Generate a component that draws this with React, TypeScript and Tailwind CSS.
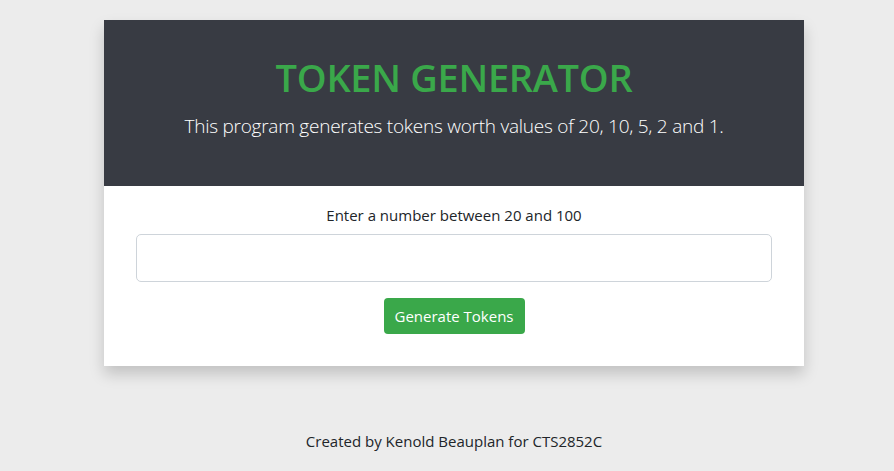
import React, { useState } from 'react';

const App = () => {
  const [amount, setAmount] = useState('');

  return (
    <div className="min-h-screen w-full bg-[#ececec] pl-[14px] font-['Open_Sans',sans-serif] text-[#212529]">
      <div className="pt-5 flex justify-center">
        <div className="w-[700px] bg-white shadow-[0_8px_14px_rgba(0,0,0,0.18)]">
          <div className="h-[166px] bg-[#383b43] flex flex-col items-center pt-[34px]">
            <h1 className="text-[38px] leading-[46px] font-semibold text-[#3aa84a] tracking-[-0.3px]">TOKEN GENERATOR</h1>
            <p className="mt-3 text-[19px] leading-[28px] font-light text-white tracking-[-0.25px]">
              This program generates tokens worth values of 20, 10, 5, 2 and 1.
            </p>
          </div>
          <div className="h-[180px] px-8 pt-[18px] flex flex-col items-center">
            <label className="text-[15px] leading-[22px]">Enter a number between 20 and 100</label>
            <input
              value={amount}
              onChange={e => setAmount(e.target.value)}
              className="mt-2 w-full h-12 rounded-[5px] border border-[#ced4da] px-4 text-lg outline-none"
            />
            <button className="mt-4 w-[141px] h-9 rounded-[4px] bg-[#3aa84a] text-white text-[15px]">
              Generate Tokens
            </button>
          </div>
        </div>
      </div>
      <div className="mt-[64px] text-center text-[15px] leading-[22px]">Created by Kenold Beauplan for CTS2852C</div>
    </div>
  );
};

export default App;
